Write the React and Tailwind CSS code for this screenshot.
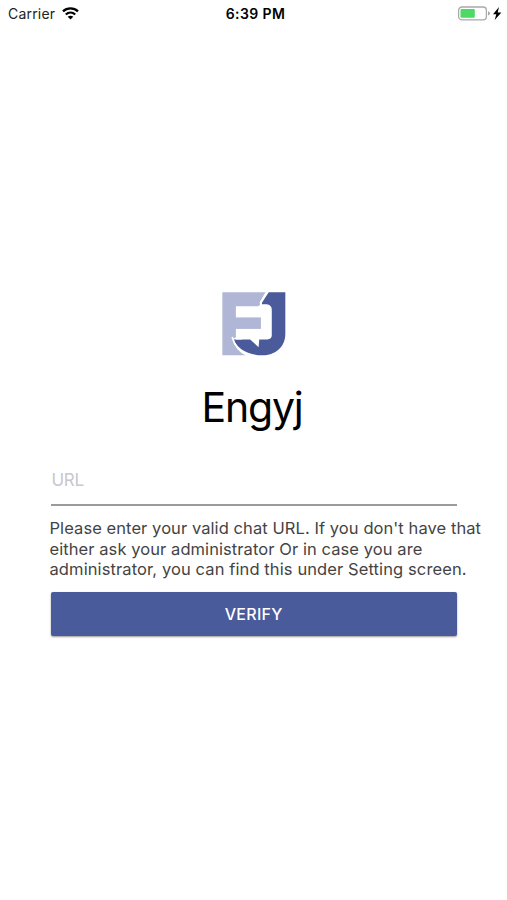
function WifiIcon() {
  return (
    <svg className="ml-[7px] h-[13px] w-[17px]" viewBox="0 0 17 13" fill="none" stroke="#000" strokeWidth="2.3">
      <path d="M1 4.300C5.200 .3 11.800 .3 16 4.300" />
      <path d="M3.800 7.500C6.500 5 10.500 5 13.200 7.500" />
      <path d="M8.500 12.500L5.700 9.700C7.300 8.300 9.700 8.300 11.300 9.700Z" fill="#000" stroke="none" />
    </svg>
  );
}

function BatteryIcon() {
  return (
    <svg className="h-[16px] w-[46px]" viewBox="0 0 46 16">
      <rect x="1.600" y="1" width="27.800" height="12.800" rx="3.400" fill="#fff" stroke="#a9a9a9" strokeWidth="1.300" />
      <rect x="3.500" y="3" width="14.300" height="8.800" rx="1" fill="#4cd964" />
      <path d="M31 5.200Q33 5.800 33 7.400T31 9.600Z" fill="#a9a9a9" />
      <path d="M42 1L36 8.200H39.300L37.700 14L44.400 6.400H40.700Z" fill="#000" />
    </svg>
  );
}

function Logo() {
  return (
    <svg className="h-[64px] w-[64px]" viewBox="32 30 189 189">
      <path d="M33 31H162L144 60V120L66 168L72 188Q84 208 106 217H33Z" fill="#b0b7d6" />
      <path d="M170 31H219V154C219 194 187 217 152 217C109 217 77 197 66 170H90L150 120V62Z" fill="#4a5a9a" />
      <path d="M165 28L145 62M62 163Q74 206 112 219" fill="none" stroke="#fff" strokeWidth="5" />
      <path d="M73 72H139L147 66H164Q179 68 179 82V158Q179 170 166 170H142L140 193L115 170H73Z" fill="#fff" />
      <path d="M66 105H147V139H66Z" fill="#b0b7d6" />
    </svg>
  );
}

export default function App() {
  return (
    <main className="flex h-[900px] w-[507px] flex-col overflow-hidden bg-white font-['Inter',sans-serif] text-black">
      <header className="grid h-[27px] shrink-0 grid-cols-3 items-center pl-2 pr-[4px]">
        <div className="flex items-center text-[14px] tracking-[0.2px] text-[#222]">
          <span>Carrier</span>
          <WifiIcon />
        </div>
        <time className="text-center text-[14px] font-semibold tracking-[0.4px]">6:39 PM</time>
        <div className="flex justify-end">
          <BatteryIcon />
        </div>
      </header>
      <section className="flex flex-col pl-[51px] pt-[265px]">
        <div className="flex w-[406px] flex-col items-center">
          <Logo />
          <h1 className="mt-[26px] pr-[4px] text-[41px] leading-[50px] tracking-[-1.2px]">Engyj</h1>
        </div>
        <input
          aria-label="URL"
          placeholder="URL"
          className="mt-[32px] h-[42px] w-[406px] border-b-2 border-[#9b9b9b] pb-[8px] pl-[0.5px] text-[17px] tracking-[-0.3px] outline-none placeholder:text-[#c7c7cc]"
        />
        <p className="-ml-[1.500px] mt-[12px] whitespace-nowrap text-[16.500px] leading-[20.700px] tracking-[0.075px] text-[#444]">
          Please enter your valid chat URL. If you don't have that
          <br />
          either ask your administrator Or in case you are
          <br />
          <span className="tracking-[0.105px]">administrator, you can find this under Setting screen.</span>
        </p>
        <button className="mt-[12px] h-[43.500px] w-[405.500px] rounded-[2px] bg-[#495b9a] text-[16px] font-medium tracking-[0.3px] text-white shadow-[0_1px_2px_rgba(0,0,0,0.4)]">
          VERIFY
        </button>
      </section>
    </main>
  );
}
